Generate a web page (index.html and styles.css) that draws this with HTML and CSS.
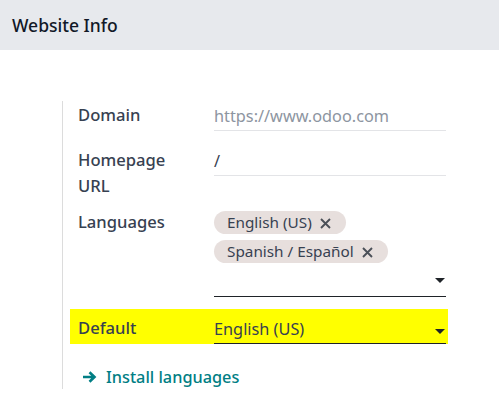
FILE: index.html
```html
<!DOCTYPE html>
<html>
<head>
<meta charset="utf-8">
<link rel="stylesheet" href="styles.css">
</head>
<body>
<div class="header">Website Info</div>
<div class="group">
  <div class="row row-domain">
    <div class="label">Domain</div>
    <div class="field input placeholder">https://www.odoo.com</div>
  </div>
  <div class="row row-home">
    <div class="label">Homepage<br>URL</div>
    <div class="field input">/</div>
  </div>
  <div class="row row-lang">
    <div class="label">Languages</div>
    <div class="field">
      <div class="tags">
        <span class="tag">English (US)<svg class="x" width="11" height="11" viewBox="0 0 11 11"><path d="M1 1L10 10M10 1L1 10" stroke="#4b5058" stroke-width="1.9"/></svg></span>
        <span class="tag">Spanish / Español<svg class="x" width="11" height="11" viewBox="0 0 11 11"><path d="M1 1L10 10M10 1L1 10" stroke="#4b5058" stroke-width="1.9"/></svg></span>
      </div>
      <div class="select empty"><span class="caret"></span></div>
    </div>
  </div>
  <div class="row row-default">
    <div class="label">Default</div>
    <div class="field select"><span>English (US)</span><span class="caret"></span></div>
  </div>
  <div class="row row-link">
    <a class="link"><svg width="16" height="14" viewBox="0 0 16 14"><path d="M1 7h11M7.5 2.2L12.5 7 7.5 11.8" stroke="#017e84" stroke-width="2.6" fill="none" stroke-linecap="butt"/></svg>Install languages</a>
  </div>
</div>
</body>
</html>
```
FILE: styles.css
```css
html, body { margin: 0; padding: 0; background: #fff; }
body { font-family: "Noto Sans", "Open Sans", sans-serif; color: #374151; font-size: 16.3px; }
.header {
  height: 50px; background: #e7e9ed; display: flex; align-items: center;
  padding-left: 12px; font-size: 17.5px; font-weight: 500; color: #111827;
}
.group {
  margin: 51px 0 0 62px; border-left: 1px solid #dcdcdc; padding-left: 15px;
  width: 370px; height: 288px; box-sizing: border-box;
}
.row { display: flex; }
.label { width: 136px; flex: none; font-weight: 500; line-height: 26px; color: #374151; font-size: 16.6px; }
.field { width: 232px; flex: none; }
.input { height: 29px; line-height: 26px; border-bottom: 1px solid #e3e4e7; box-sizing: border-box; padding-top: 1px; }
.placeholder { color: #8d95a1; }
.row-domain { padding-top: 1px; }
.row-home { margin-top: 16px; }
.row-lang { margin-top: 10px; }
.tags { padding-top: 2px; display: flex; flex-direction: column; align-items: flex-start; gap: 6px; }
.tag {
  background: #e7dfdd; border-radius: 12px; height: 23px; line-height: 23px;
  padding: 0 15px 0 13px; font-size: 15.3px; color: #374151; white-space: nowrap;
  display: inline-flex; align-items: center;
}
.x { margin-left: 8px; margin-top: 1px; }
.select {
  display: flex; justify-content: space-between; align-items: center;
  border-bottom: 1px solid #1f2328; box-sizing: border-box; padding-right: 1px;
}
.select.empty { height: 34px; justify-content: flex-end; }
.caret { width: 0; height: 0; border-left: 5px solid transparent; border-right: 5px solid transparent; border-top: 5px solid #1f2328; margin-top: 1px; }
.row-default {
  margin: 12px 0 0 -8px; padding-left: 8px; background: #ffff00; height: 35px; width: 378px;
  align-items: center; box-sizing: border-box;
}
.row-default .label { line-height: 26px; padding-top: 3px; }
.row-default .field { height: 35px; padding-top: 6px; color: #374151; }
.row-default .caret { margin-top: 4px; }
.row-link { margin-top: 20px; padding-left: 4px; }
.link {
  color: #017e84; font-weight: 500; font-size: 16.3px; display: flex; align-items: center; gap: 8px;
  line-height: 26px;
}
```
